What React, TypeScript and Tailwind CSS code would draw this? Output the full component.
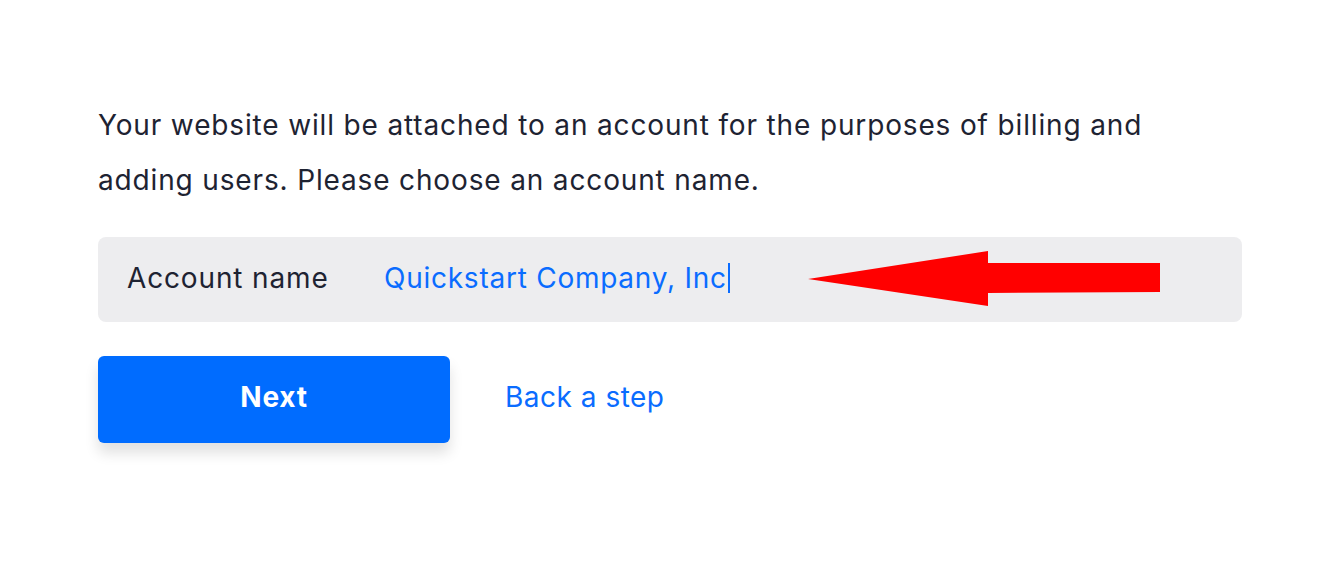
export default function App() {
  return (
    <div className="min-h-[569px] w-full bg-white font-['Inter',sans-serif] text-[#1e2332]">
      <div className="w-[1144px] pl-[98px] pt-[98px] box-content">
        <p className="w-[1080px] text-[28px] leading-[55px] tracking-[0.85px]">
          Your website will be attached to an account for the purposes of billing and adding users. Please choose an
          account name.
        </p>

        <div className="relative mt-[29px] flex h-[85px] w-[1144px] items-stretch overflow-hidden rounded-lg bg-[#ededef]">
          <label className="flex w-[257px] items-center pb-[3px] pl-[29px] text-[28px] tracking-[0.85px]">
            Account name
          </label>
          <div className="flex flex-1 items-center pb-[3px] pl-[29px] text-[28px] tracking-[0.75px] text-[#0a6cff]">
            Quickstart Company, Inc
            <span className="ml-[1px] inline-block h-[30px] w-[2px] bg-[#0a6cff]" />
          </div>
          <svg className="absolute left-[710px] top-[14px]" width="352" height="56" viewBox="0 0 352 56">
            <polygon points="0,28 180,0 180,12 352,12 352,41 180,42 180,55" fill="#ff0000" />
          </svg>
        </div>

        <div className="mt-[34px] flex items-center gap-[55px]">
          <button className="h-[87px] w-[352px] rounded-md bg-[#006cff] pb-[5px] text-[28px] font-bold tracking-[0.75px] text-white shadow-[0_10px_14px_rgba(0,0,0,0.12)]">
            Next
          </button>
          <a className="pb-[5px] text-[28px] tracking-[0.5px] text-[#0a6cff]">Back a step</a>
        </div>
      </div>
    </div>
  );
}
